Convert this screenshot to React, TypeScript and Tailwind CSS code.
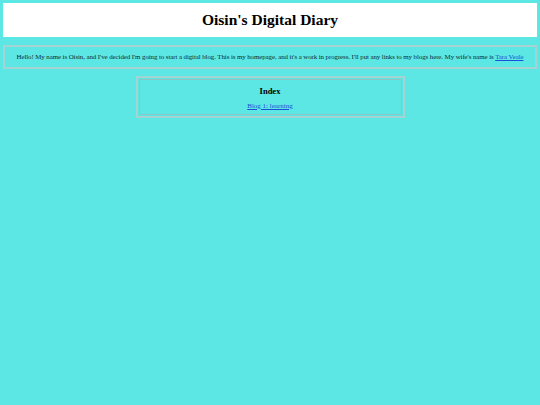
export default function App() {
  return (
    <div className="min-h-[405px] bg-[#5ce7e5] p-[3px] font-['Liberation_Serif',serif] text-black">
      <header className="flex h-[34px] items-center justify-center bg-white">
        <h1 className="text-[15.5px] font-bold leading-none">Oisin's Digital Diary</h1>
      </header>

      <section className="mt-[8px] flex h-[24px] items-center justify-center border-2 border-[#a3d3d2]">
        <p className="text-[6.9px] leading-none tracking-[-0.08px] text-[#0d2e2e]">
          Hello! My name is Oisin, and I've decided I'm going to start a digital blog. This is my homepage, and it's a work in progress. I'll put any links to my blogs here. My wife's name is{' '}
          <a href="#" className="text-[#1a4fd6] underline">Tara Veale</a>
        </p>
      </section>

      <section className="mx-auto mt-[7px] flex h-[42px] w-[269px] flex-col items-center border-2 border-[#a3d3d2] p-px">
        <div className="flex h-full w-full flex-col items-center border border-[#8fc4c3]">
          <h2 className="mt-[7px] text-[8.5px] font-bold leading-none">Index</h2>
          <a href="#" className="mt-[7px] text-[7px] leading-none text-[#1a4fd6] underline">
            Blog 1: learning
          </a>
        </div>
      </section>
    </div>
  )
}
